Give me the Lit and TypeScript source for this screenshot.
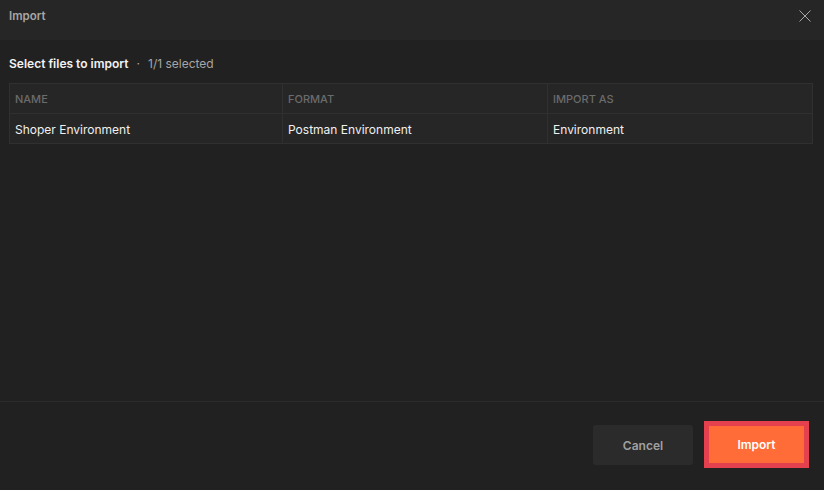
import { LitElement, html, css } from "lit";
import { customElement } from "lit/decorators.js";

@customElement("app-root")
export class AppRoot extends LitElement {
  static styles = css`
    :host {
      display: flex;
      flex-direction: column;
      width: 824px;
      height: 490px;
      background: #212121;
      font-family: Inter, "Liberation Sans", sans-serif;
      font-size: 12px;
      color: #f0f0f0;
      overflow: hidden;
    }
    .header {
      height: 40px;
      flex: none;
      background: #262626;
      display: flex;
      align-items: center;
      justify-content: space-between;
      padding: 0 13px 8px 9px;
      box-sizing: border-box;
      color: #a6a6a6;
      font-weight: 600;
      font-size: 11.5px;
    }
    .header svg { display: block; }
    .body {
      flex: 1;
      padding: 16px 11px 0 9px;
      box-sizing: border-box;
    }
    .title {
      height: 15px;
      line-height: 15px;
      display: flex;
      margin-bottom: 12px;
      white-space: pre;
    }
    .title b { font-weight: 600; color: #f2f2f2; }
    .title .dot { color: #a6a6a6; margin: 0 8px; }
    .title .count { color: #a6a6a6; }
    .table {
      display: grid;
      grid-template-columns: 273px 265px 1fr;
      grid-template-rows: 30px 30px;
      border: 1px solid #303030;
      background: #262626;
      box-sizing: border-box;
      height: 61px;
    }
    .cell {
      display: flex;
      align-items: center;
      padding-left: 5px;
      border-right: 1px solid #303030;
      border-bottom: 1px solid #303030;
      white-space: nowrap;
    }
    .cell.last { border-right: none; }
    .cell.bottom { border-bottom: none; }
    .cell.head {
      color: #6b6b6b;
      font-size: 11px;
      font-weight: 500;
    }
    .footer {
      flex: none;
      height: 89px;
      border-top: 1px solid #2b2b2b;
      box-sizing: border-box;
      display: flex;
      justify-content: flex-end;
      align-items: flex-start;
      gap: 11px;
      padding: 19px 15px 0 0;
    }
    button {
      font: inherit;
      font-weight: 600;
      border: none;
      cursor: pointer;
      padding: 0;
    }
    .cancel {
      width: 100px;
      height: 40px;
      margin-top: 4px;
      border-radius: 3px;
      background: #2b2b2b;
      color: #a0a0a0;
    }
    .import {
      width: 105px;
      height: 47px;
      box-sizing: border-box;
      border: 5px solid #e5404e;
      background: #ff6c37;
      color: #ffffff;
    }
  `;

  render() {
    return html`
      <div class="header">
        <span>Import</span>
        <svg width="12" height="12" viewBox="0 0 12 12" fill="none" stroke="#a6a6a6" stroke-width="1">
          <path d="M0.5 0.5 L11.5 11.5 M11.5 0.5 L0.5 11.5"></path>
        </svg>
      </div>
      <div class="body">
        <div class="title"><b>Select files to import</b><span class="dot">·</span><span class="count">1/1 selected</span></div>
        <div class="table">
          <div class="cell head">NAME</div>
          <div class="cell head">FORMAT</div>
          <div class="cell head last">IMPORT AS</div>
          <div class="cell bottom">Shoper Environment</div>
          <div class="cell bottom">Postman Environment</div>
          <div class="cell bottom last">Environment</div>
        </div>
      </div>
      <div class="footer">
        <button class="cancel">Cancel</button>
        <button class="import">Import</button>
      </div>
    `;
  }
}
